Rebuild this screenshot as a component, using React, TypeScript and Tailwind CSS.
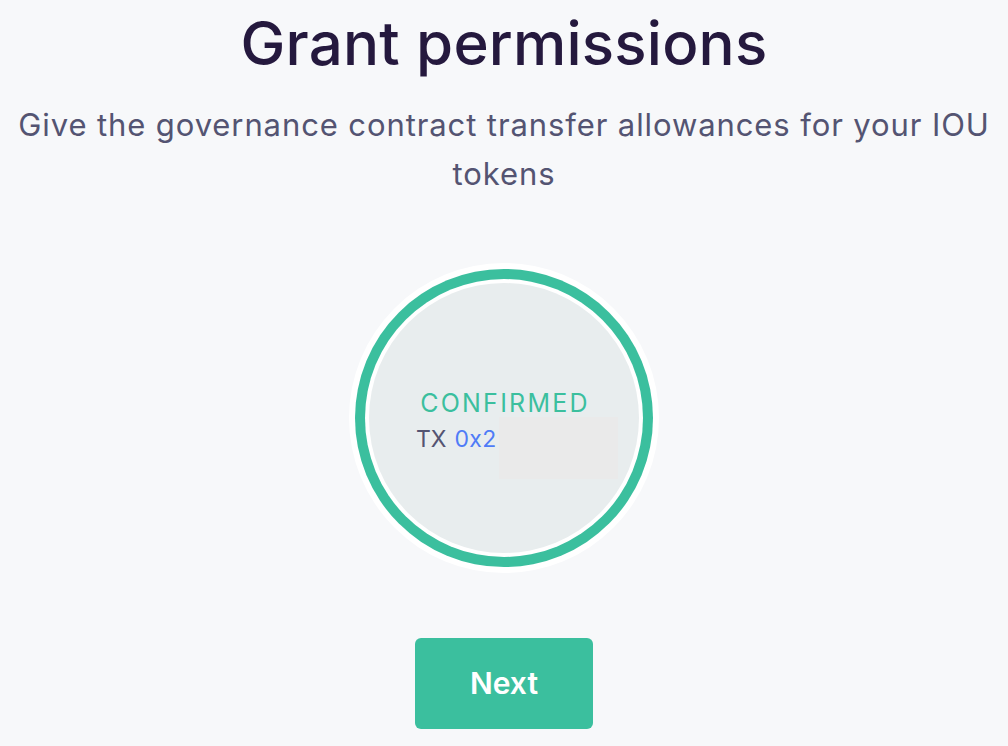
export default function App() {
  return (
    <div
      className="min-h-[746px] w-full bg-[#f7f8fa] flex flex-col items-center"
      style={{ fontFamily: 'Inter, "Noto Sans", sans-serif' }}
    >
      <h1 className="mt-[13px] text-[60px] leading-[60px] font-medium text-[#25193e] tracking-[0.2px]">
        Grant permissions
      </h1>
      <p className="mt-[27px] max-w-[990px] px-2 text-center text-[31px] leading-[49px] tracking-[0.9px] text-[#545472]">
        Give the governance contract transfer allowances for your IOU tokens
      </p>

      <div className="mt-[65px] w-[310px] h-[310px] rounded-full bg-white flex items-center justify-center">
        <div className="w-[298px] h-[298px] rounded-full bg-[#3bbf9e] flex items-center justify-center">
          <div className="w-[278px] h-[278px] rounded-full bg-white flex items-center justify-center">
            <div className="w-[270px] h-[270px] rounded-full bg-[#e8edee] flex flex-col items-center justify-center">
              <div className="w-full flex flex-col items-center pt-[6px]">
                <div className="pl-[2px] text-[25px] leading-[30px] tracking-[2.25px] text-[#3bbf9e]">CONFIRMED</div>
                <div className="self-start ml-[47px] mt-[6px] relative flex items-start">
                  <span className="text-[23px] leading-[30px] text-[#545472]">TX</span>
                  <span className="ml-[8px] text-[23px] leading-[30px] tracking-[0.3px] text-[#4f7cf7]">0x2</span>
                  <span className="absolute left-[calc(100%+2px)] top-[-7px] w-[119px] h-[62px] bg-[#eaeaea]" />
                </div>
              </div>
            </div>
          </div>
        </div>
      </div>

      <button className="mt-[65px] w-[178px] h-[91px] rounded-[6px] bg-[#3bbf9e] text-white text-[30px] font-semibold">
        Next
      </button>
    </div>
  );
}
